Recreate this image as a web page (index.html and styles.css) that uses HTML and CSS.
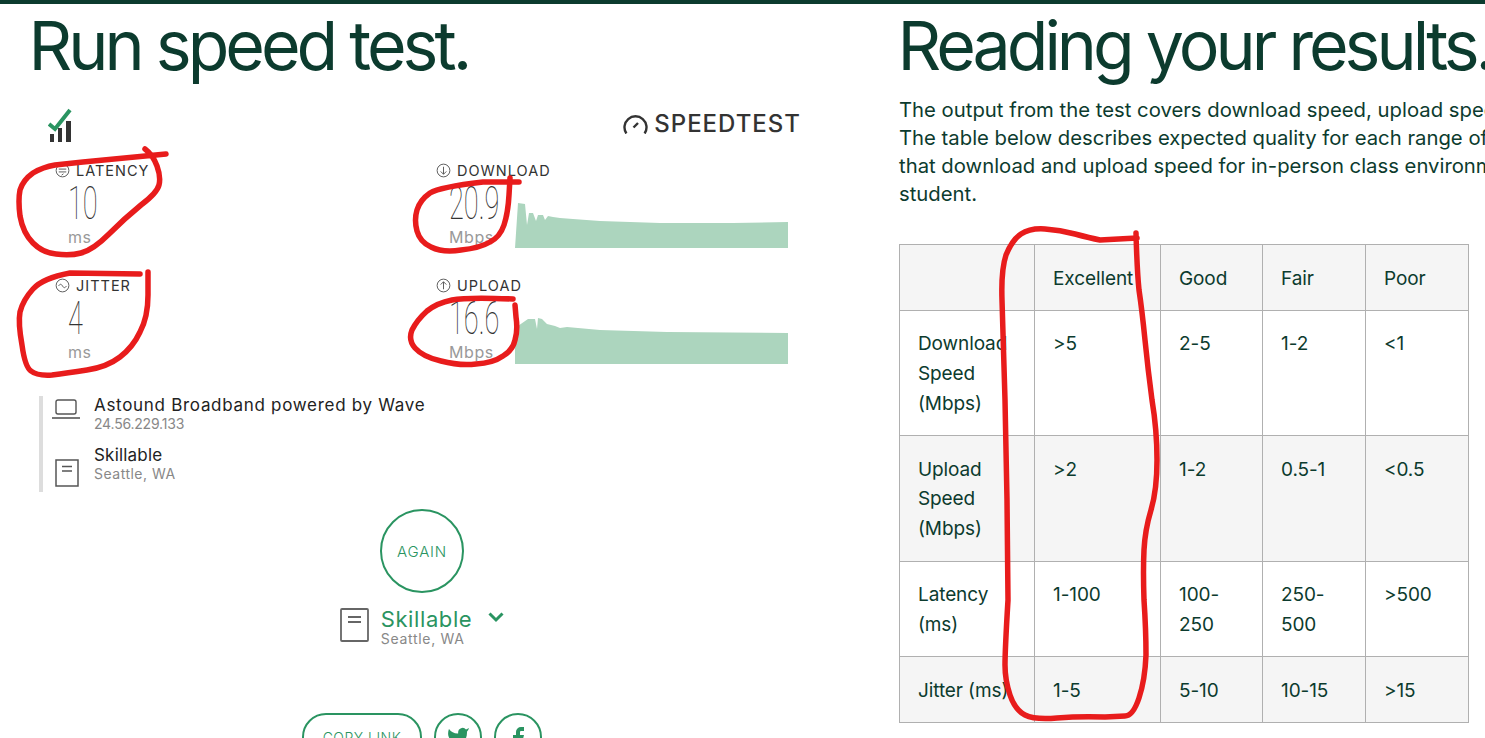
FILE: index.html
```html
<!DOCTYPE html>
<html lang="en">
<head>
<meta charset="utf-8">
<title>Speed test</title>
<link rel="stylesheet" href="styles.css">
</head>
<body>
<main class="page">
  <section class="left">
    <h1 class="title">Run speed test.</h1>
    <div class="widget">
      <header class="widget-head">
        <svg class="ookla" width="24" height="34" viewBox="0 0 24 34">
          <path d="M1 16l6 5L22 2" fill="none" stroke="#2a9461" stroke-width="4"/>
          <path d="M2 26h4v8H2zM10 20h4v14h-4zM18 13h5v21h-5z" fill="#333"/>
        </svg>
        <div class="brand">
          <svg width="25" height="20" viewBox="0 0 25 20"><path d="M3.4 19.5A11 11 0 1 1 21.6 19.5" fill="none" stroke="#333" stroke-width="2.4"/><path d="M10.5 13.5l4.5-4.5" stroke="#333" stroke-width="2.4"/></svg>
          <span class="brand-name">SPEEDTEST</span>
        </div>
      </header>
      <div class="metrics">
        <div class="metric">
          <div class="m-label"><svg class="m-icon" viewBox="0 0 16 16"><circle cx="8" cy="8" r="6.8"/><path d="M4 6.5h8M4 9.5h8M9 11.5l-2 1.5"/></svg>LATENCY</div>
          <div class="m-value"><span class="num">10</span></div>
          <div class="m-unit">ms</div>
        </div>
        <div class="metric">
          <div class="m-label"><svg class="m-icon" viewBox="0 0 16 16"><circle cx="8" cy="8" r="6.8"/><path d="M8 4v8M5 9l3 3 3-3"/></svg>DOWNLOAD</div>
          <div class="m-value"><span class="num">20.9</span></div>
          <div class="m-unit">Mbps</div>
          <svg class="chart" width="274" height="46" viewBox="515 203 274 46"><path d="M515 248L518 203 525 204 527 225 529 213 533 213 536 221 538 215 543 215 545 220 548 216 553 217 560 218 573 219 600 221 660 223 693 223 733 223 788 222V248z"/></svg>
        </div>
        <div class="metric">
          <div class="m-label"><svg class="m-icon" viewBox="0 0 16 16"><circle cx="8" cy="8" r="6.8"/><path d="M3.8 8.5c1.5-2.4 2.8-2.4 4.2 0s2.700 2.400 4.200 0"/></svg>JITTER</div>
          <div class="m-value"><span class="num">4</span></div>
          <div class="m-unit">ms</div>
        </div>
        <div class="metric">
          <div class="m-label"><svg class="m-icon" viewBox="0 0 16 16"><circle cx="8" cy="8" r="6.8"/><path d="M8 12V4M5 7l3-3 3 3"/></svg>UPLOAD</div>
          <div class="m-value"><span class="num">16.6</span></div>
          <div class="m-unit">Mbps</div>
          <svg class="chart" width="274" height="47" viewBox="515 317 274 47"><path d="M515 327L528 318 535 318 537 328 538 317 542 318 547 323 555 325 560 327 567 326 600 329 667 331 788 332V363H515z"/></svg>
        </div>
      </div>
      <div class="hosts">
        <div class="host">
          <svg class="host-icon" width="28" height="21" viewBox="0 0 28 21"><rect x="4" y="1" width="20" height="14" rx="2" fill="none" stroke="#555" stroke-width="1.4"/><path d="M0 19h28" stroke="#555" stroke-width="1.6"/></svg>
          <div><div class="host-name">Astound Broadband powered by Wave</div><div class="host-sub host-ip">24.56.229.133</div></div>
        </div>
        <div class="host host-server">
          <svg class="host-icon book" width="24" height="28" viewBox="0 0 24 28"><rect x="1" y="1" width="22" height="26" fill="none" stroke="#555" stroke-width="1.5"/><path d="M7 7.500h10M7 12h10" stroke="#555" stroke-width="1.500"/></svg>
          <div><div class="host-name">Skillable</div><div class="host-sub">Seattle, WA</div></div>
        </div>
      </div>
      <div class="actions">
        <button class="again">AGAIN</button>
        <div class="server-pick">
          <svg class="pick-icon" width="29" height="34" viewBox="0 0 29 34"><rect x="1" y="1" width="27" height="32" rx="1" fill="none" stroke="#666" stroke-width="1.800"/><path d="M8 9h13M8 14h13" stroke="#666" stroke-width="1.800"/></svg>
          <div class="pick-text"><div class="pick-name">Skillable</div><div class="pick-sub">Seattle, WA</div></div>
          <svg class="chev" width="16" height="12" viewBox="0 0 16 12"><path d="M1.500 2.500L8 9l6.500-6.500" fill="none" stroke="#2a9461" stroke-width="3"/></svg>
        </div>
        <div class="share">
          <button class="pill">COPY LINK</button>
          <button class="round"><svg width="24" height="24" viewBox="0 0 24 24"><path d="M23 3a10.900 10.900 0 0 1-3 1.400 4.480 4.480 0 0 0-7.860 3v1A10.660 10.660 0 0 1 3 4s-4 9 5 13a11.640 11.640 0 0 1-7 2c9 5 20 0 20-11.500a4.500 4.500 0 0 0-.08-.83A7.720 7.720 0 0 0 23 3z" fill="#2a9461"/></svg></button>
          <button class="round"><svg width="24" height="24" viewBox="0 0 24 24"><path d="M18 2h-3a5 5 0 0 0-5 5v3H7v4h3v8h4v-8h3l1-4h-4V7a1 1 0 0 1 1-1h3z" fill="#2a9461"/></svg></button>
        </div>
      </div>
    </div>
  </section>
  <section class="right">
    <h1 class="title">Reading your results.</h1>
    <p class="intro">The output from the test covers download speed, upload speed, latency, and jitter.<br>The table below describes expected quality for each range of values. Please note<br>that download and upload speed for in-person class environments are measured per<br>student.</p>
    <table class="results">
      <colgroup><col class="c1"><col class="c2"><col class="c3"><col class="c4"><col class="c5"></colgroup>
      <tr><td></td><td>Excellent</td><td>Good</td><td>Fair</td><td>Poor</td></tr>
      <tr><td>Download Speed (Mbps)</td><td>&gt;5</td><td>2-5</td><td>1-2</td><td>&lt;1</td></tr>
      <tr><td>Upload Speed (Mbps)</td><td>&gt;2</td><td>1-2</td><td>0.5-1</td><td>&lt;0.5</td></tr>
      <tr><td>Latency (ms)</td><td>1-100</td><td>100-250</td><td>250-500</td><td>&gt;500</td></tr>
      <tr><td>Jitter (ms)</td><td>1-5</td><td>5-10</td><td>10-15</td><td>&gt;15</td></tr>
    </table>
  </section>
</main>
<svg class="ink" width="1485" height="738" viewBox="0 0 1485 738">
  <path d="M166 154L83 162 55 165Q43 167 33 173Q23 180 20 190Q18 200 20 216Q23 233 33 243Q43 253 56 254Q70 256 81 253Q93 250 109 234Q125 218 141 205Q157 193 159 185Q161 177 157 166Q153 155 145 149"/>
  <path d="M140 274L70 273Q43 278 33 289Q23 300 20 312Q18 323 22 345Q25 367 31 371Q37 376 52 375Q67 373 87 370Q107 367 120 357Q133 347 140 332Q148 317 148 295L148 272"/>
  <path d="M519 182L483 182Q440 187 430 193Q420 200 417 210Q414 220 417 231Q420 242 431 247Q443 253 461 250Q480 248 490 242Q500 237 504 225Q508 213 509 195L510 178"/>
  <path d="M513 299Q467 297 452 300Q437 303 427 311Q417 320 412 330Q408 340 415 348Q423 357 441 361Q460 366 476 364Q493 363 503 356Q513 350 515 340Q518 330 516 317L515 305"/>
  <path d="M1137 238L1100 240Q1090 238 1075 234Q1060 230 1045 229Q1030 228 1021 234Q1012 240 1006 255Q1001 270 1002 300L1005 400 1007 500 1008 600Q1005 650 1005 665Q1005 680 1010 695Q1015 710 1025 715Q1035 720 1057 718Q1080 716 1105 717L1125 716Q1133 716 1139 698Q1145 680 1146 655Q1146 630 1144 600Q1143 570 1144 550Q1145 530 1151 510Q1157 490 1157 460Q1157 430 1152 400Q1148 370 1145 340Q1142 310 1139 290Q1137 270 1136 233"/>
</svg>
</body>
</html>
```
FILE: styles.css
```css
* { box-sizing: border-box; }
html, body { margin: 0; height: 738px; overflow: hidden; background: #fff; }
body { font-family: Inter, "Liberation Sans", sans-serif; color: #0c3b2e; border-top: 4px solid #0c3b2e; position: relative; }
.page { display: grid; grid-template-columns: 899px 640px; height: 734px; overflow: hidden; }
.left { padding-left: 30px; }
.title { margin: -1px 0 1px -1.5px; font-size: 68px; font-weight: 400; line-height: 84px; letter-spacing: -4px; color: #0c3b2e; white-space: nowrap; }
.widget { width: 781px; margin-left: -10px; font-family: Inter, sans-serif; color: #333; height: 650px; }
.widget-head { display: flex; justify-content: space-between; align-items: center; padding: 19px 0 0 28px; height: 54px; }
.brand { display: flex; align-items: center; gap: 6px; margin-top: -2px; }
.brand-name { font-size: 24px; font-weight: 500; letter-spacing: 1px; color: #333; }
.metrics { display: grid; grid-template-columns: 381px 1fr; grid-auto-rows: 115px; padding: 18px 0 0 35px; }
.metric { position: relative; }
.m-label { display: flex; align-items: center; gap: 6px; font-size: 14.500px; letter-spacing: 1px; height: 20px; color: #333; }
.m-icon { width: 15px; height: 15px; fill: none; stroke: #555; stroke-width: 1; }
.m-value { padding-left: 13px; height: 47px; display: flex; align-items: center; }
.num { display: inline-block; font-family: Roboto, sans-serif; font-weight: 100; font-size: 46px; line-height: 47px; color: #333; transform: scaleX(.59); transform-origin: left center; }
.m-unit { padding-left: 13px; font-size: 16px; letter-spacing: .6px; color: #999; }
.chart { position: absolute; left: 79px; top: 43px; }
.chart path { fill: #acd5be; }
.hosts { margin: 6px 0 0 19px; border-left: 4px solid #ddd; height: 96px; padding-left: 9px; }
.host { display: flex; gap: 14px; }
.host-icon { flex: none; margin-top: 3px; }
.host-name { font-size: 17px; letter-spacing: .7px; color: #222; line-height: 19px; }
.host-sub { font-size: 14px; letter-spacing: .5px; color: #888; line-height: 18px; }
.host-ip { letter-spacing: -.2px; }
.host-server { margin-top: 13px; gap: 13px; }
.host-server .host-name { letter-spacing: .2px; }
.book { margin: 13px 2px 0 3px; }
.actions { display: flex; flex-direction: column; align-items: center; padding-top: 17px; width: 804px; }
.again { width: 84px; height: 84px; border: 2px solid #2a9461; border-radius: 50%; background: #fff; color: #2a9461; font: 300 15px Inter, sans-serif; letter-spacing: .8px; padding: 0; }
.server-pick { display: flex; align-items: flex-start; margin-top: 15px; height: 58px; }
.pick-icon { margin-right: 12px; }
.pick-text { margin-right: 16px; }
.pick-name { font-size: 22px; line-height: 22px; color: #2a9461; letter-spacing: .6px; }
.pick-sub { font-size: 14px; line-height: 18px; color: #888; letter-spacing: .7px; }
.chev { margin-top: 3px; }
.share { display: flex; gap: 12px; margin-top: 47px; }
.pill { width: 120px; height: 48px; border: 2px solid #2a9461; border-radius: 24px; background: #fff; color: #2a9461; font: 300 14px Inter, sans-serif; letter-spacing: .5px; padding: 0; }
.round { width: 48px; height: 48px; border: 2px solid #2a9461; border-radius: 50%; background: #fff; padding: 0; display: flex; align-items: center; justify-content: center; }
.intro { margin: 9px 0 0; font-size: 20.300px; line-height: 28px; white-space: nowrap; color: #0c3b2e; }
.results { table-layout: fixed; border-collapse: collapse; width: 570px; margin-top: 36px; font-size: 19px; letter-spacing: -.1px; line-height: 29.800px; color: #0c3b2e; }
.results td { border: 1px solid #b0b0b0; padding: 18.500px 18px 16.500px; vertical-align: top; }
.results tr:nth-child(odd) { background: #f5f5f5; }
.c1 { width: 135px; } .c2 { width: 126px; } .c3 { width: 102px; } .c4 { width: 103px; } .c5 { width: 103px; }
.ink { position: absolute; left: 0; top: -4px; pointer-events: none; }
.ink path { fill: none; stroke: #e81c1c; stroke-width: 5.500; stroke-linecap: round; stroke-linejoin: round; }
```
